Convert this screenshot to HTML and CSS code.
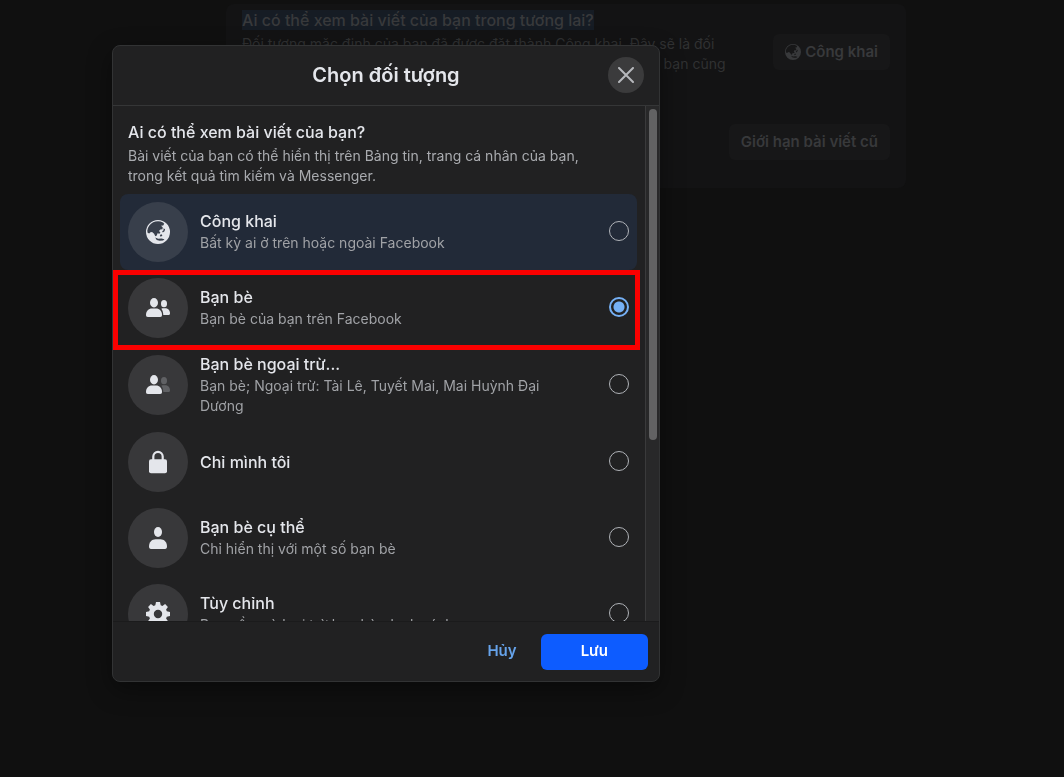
FILE: index.html
```html
<!DOCTYPE html>
<html lang="vi">
<head>
    <meta charset="UTF-8">
    <meta name="viewport" content="width=device-width, initial-scale=1.0">
    <title>Chọn đối tượng</title>
    <link rel="stylesheet" href="styles.css">
</head>
<body>

    <svg width="0" height="0" class="sprite" aria-hidden="true">
        <symbol id="globe" viewBox="0 0 24 24">
            <path fill-rule="evenodd" d="M12 0a12 12 0 1 0 0 24 12 12 0 0 0 0-24zM1.300 10.800C1.700 7 4 3.800 7.200 2.300 10 1 14 .9 17 2.400l1.200 1.400-1 1.600-2.200.4 1.700 1.400-.2 2-2.200.3-1.300 1.500 1.400 1.500-1 1.200-1.900-.4-.7 2.200-1.500.8-1.200-2.600-2-1.700-1.700.2-1.200 1.400-1.600-.8zM17.500 8.300l1.600 1-.6 2-1.700 1.300-.6-1.300 1.400-1zM13.800 15l1.800-.8.8 1.600-1.800.9zM9.200 17.500l3 1.200 3.300-.3 3 .9-1.500 1.200-3.300.3-3-.8z"/>
        </symbol>
        <symbol id="person" viewBox="0 0 24 24">
            <ellipse cx="12" cy="6" rx="4" ry="5"/>
            <path d="M3 20.500C3 16 6 13.200 9.500 13.200h5c3.500 0 6.500 2.800 6.500 7.300 0 1.600-.6 2.500-2 2.500H5c-1.400 0-2-.9-2-2.500z"/>
        </symbol>
        <symbol id="friend-front" viewBox="0 0 24 24">
            <ellipse cx="8" cy="6.700" rx="4" ry="4.700"/>
            <path d="M0 19c0-4 2.600-6.500 6-6.500h4c3.400 0 6 2.500 6 6.500 0 1.300-.5 2-1.800 2H1.800C.5 21 0 20.300 0 19z"/>
        </symbol>
        <symbol id="friend-back" viewBox="0 0 24 24">
            <ellipse cx="18" cy="7.700" rx="3" ry="3.600"/>
            <path d="M15.300 12.800c.8-.4 1.500-.5 2.400-.5h1.300c2.800 0 5 2 5 4.900 0 1.200-.5 1.800-1.500 1.800h-5.200c-.1-2.500-.7-4.500-2-6.200z"/>
        </symbol>
        <symbol id="lock" viewBox="0 0 24 24">
            <path d="M7.300 10V6.600a4.700 4.700 0 0 1 9.400 0V10" fill="none" stroke="currentColor" stroke-width="2.200"/>
            <rect x="3" y="9.300" width="18" height="14" rx="2"/>
        </symbol>
        <symbol id="gear" viewBox="0 0 24 24">
            <path fill-rule="evenodd" d="M10 0h4l.7 3.200 1.700.7 2.700-1.800 2.800 2.800-1.800 2.700.7 1.700L24 10v4l-3.200.7-.7 1.700 1.800 2.700-2.800 2.800-2.700-1.800-1.700.7L14 24h-4l-.7-3.200-1.700-.7-2.700 1.800-2.800-2.800 1.800-2.700-.7-1.700L0 14v-4l3.200-.7.7-1.700-1.800-2.700 2.800-2.800 2.700 1.800 1.700-.7zM12 7.800a4.200 4.200 0 1 0 0 8.400 4.200 4.200 0 0 0 0-8.400z"/>
        </symbol>
    </svg>

    <main class="settings">
        <section class="settings-card">
            <div class="settings-row">
                <div class="settings-text">
                    <h2><mark>Ai có thể xem bài viết của bạn trong tương lai?</mark></h2>
                    <p>Đối tượng mặc định của bạn đã được đặt thành Công khai. Đây sẽ là đối<br>tượng cho tất cả bài viết trong tương lai của bạn, nhưng lúc nào bạn cũng</p>
                </div>
                <button type="button" class="settings-btn"><svg class="btn-icon"><use href="#globe"/></svg>Công khai</button>
            </div>
            <div class="settings-row limit-row">
                <button type="button" class="settings-btn">Giới hạn bài viết cũ</button>
            </div>
        </section>
    </main>

    <div class="overlay">
        <form class="modal" role="dialog" aria-labelledby="modalTitle">
            <header class="modal-header">
                <h1 id="modalTitle">Chọn đối tượng</h1>
                <button type="button" class="close-btn" aria-label="Đóng">
                    <svg viewBox="0 0 16 16"><path d="M1 1l14 14M15 1L1 15"/></svg>
                </button>
            </header>

            <div class="modal-body">
                <div class="options">
                    <div class="intro">
                        <h2>Ai có thể xem bài viết của bạn?</h2>
                        <p>Bài viết của bạn có thể hiển thị trên Bảng tin, trang cá nhân của bạn,<br>trong kết quả tìm kiếm và Messenger.</p>
                    </div>

                    <label class="option hovered">
                        <span class="icon"><svg><use href="#globe"/></svg></span>
                        <span class="option-text">
                            <span class="name">Công khai</span>
                            <span class="desc">Bất kỳ ai ở trên hoặc ngoài Facebook</span>
                        </span>
                        <input type="radio" name="audience">
                    </label>

                    <label class="option marked">
                        <span class="icon"><svg><use href="#friend-front"/><use href="#friend-back"/></svg></span>
                        <span class="option-text">
                            <span class="name">Bạn bè</span>
                            <span class="desc">Bạn bè của bạn trên Facebook</span>
                        </span>
                        <input type="radio" name="audience" checked>
                    </label>

                    <label class="option">
                        <span class="icon"><svg><use href="#friend-front"/><use href="#friend-back" class="faded"/></svg></span>
                        <span class="option-text">
                            <span class="name">Bạn bè ngoại trừ...</span>
                            <span class="desc">Bạn bè; Ngoại trừ: Tài Lê, Tuyết Mai, Mai Huỳnh Đại Dương</span>
                        </span>
                        <input type="radio" name="audience">
                    </label>

                    <label class="option">
                        <span class="icon"><svg><use href="#lock"/></svg></span>
                        <span class="option-text">
                            <span class="name">Chỉ mình tôi</span>
                        </span>
                        <input type="radio" name="audience">
                    </label>

                    <label class="option">
                        <span class="icon"><svg><use href="#person"/></svg></span>
                        <span class="option-text">
                            <span class="name">Bạn bè cụ thể</span>
                            <span class="desc">Chỉ hiển thị với một số bạn bè</span>
                        </span>
                        <input type="radio" name="audience">
                    </label>

                    <label class="option">
                        <span class="icon"><svg><use href="#gear"/></svg></span>
                        <span class="option-text">
                            <span class="name">Tùy chỉnh</span>
                            <span class="desc">Bao gồm và loại trừ bạn bè, danh sách</span>
                        </span>
                        <input type="radio" name="audience">
                    </label>
                </div>
                <div class="scroll-track"><div class="scroll-thumb"></div></div>
            </div>

            <footer class="modal-footer">
                <button type="button" class="cancel-btn">Hủy</button>
                <button type="submit" class="save-btn">Lưu</button>
            </footer>
        </form>
    </div>

</body>
</html>
```
FILE: styles.css
```css
* {
  box-sizing: border-box;
}

body {
  margin: 0;
  background-color: #101010;
  color: #e4e6eb;
  font-family: Inter, "Liberation Sans", sans-serif;
  font-size: 14px;
  line-height: 20px;
}

h1, h2, p {
  margin: 0;
}

button {
  border: none;
  border-radius: 6px;
  font-family: inherit;
  font-size: 15px;
  font-weight: 600;
  line-height: 20px;
  cursor: pointer;
}

svg {
  fill: currentColor;
}

.sprite {
  position: absolute;
}

/* page behind the dialog */
.settings {
  padding: 4px 158px 0 226px;
}

.settings-card {
  padding: 6px 16px 28px;
  border-radius: 8px;
  background-color: #131314;
  color: #303132;
}

.settings-row {
  display: flex;
  justify-content: space-between;
  align-items: center;
}

.settings-text h2 {
  font-size: 16px;
  font-weight: 500;
  line-height: 20px;
  margin-bottom: 4px;
}

.settings-text mark {
  background-color: #161c24;
  color: #38393b;
}

.settings-text {
  height: 84px;
  white-space: nowrap;
}

.settings-btn {
  display: flex;
  align-items: center;
  gap: 4px;
  height: 36px;
  padding: 0 12px;
  background-color: #171718;
  color: #38393b;
}

.btn-icon {
  width: 16px;
  height: 16px;
}

.limit-row {
  justify-content: flex-end;
  margin-top: 30px;
}

/* dialog */
.overlay {
  position: fixed;
  inset: 0;
  padding: 45px 112px;
}

.modal {
  display: flex;
  flex-direction: column;
  max-width: 548px;
  height: calc(100vh - 140px);
  border: 1px solid #323334;
  border-radius: 8px;
  background-color: #212122;
  box-shadow: 0 8px 24px rgba(0, 0, 0, 0.4);
  overflow: hidden;
}

.modal-header {
  display: grid;
  grid-template-columns: 36px 1fr 36px;
  align-items: center;
  height: 60px;
  padding: 0 15px 1px;
  border-bottom: 1px solid #353637;
}

.modal-header h1 {
  grid-column: 2;
  font-size: 20px;
  font-weight: 600;
  line-height: 24px;
  text-align: center;
}

.close-btn {
  display: flex;
  align-items: center;
  justify-content: center;
  width: 36px;
  height: 36px;
  padding: 0;
  border-radius: 50%;
  background-color: #3b3b3c;
  color: #b6b8bc;
}

.close-btn svg {
  width: 16px;
  height: 16px;
  fill: none;
  stroke: currentColor;
  stroke-width: 2;
  stroke-linecap: round;
}

.modal-body {
  display: flex;
  flex: 1;
  min-height: 0;
}

.options {
  flex: 1;
  padding: 16px 8px 0 7px;
  overflow: hidden;
}

.intro {
  padding: 0 8px 8px;
}

.intro h2 {
  font-size: 16px;
  font-weight: 500;
  line-height: 20px;
  margin-bottom: 4px;
}

.intro p {
  color: #a9abaf;
}

.option {
  position: relative;
  display: flex;
  align-items: center;
  gap: 12px;
  padding: 8px;
  border-radius: 8px;
  cursor: pointer;
}

.hovered {
  background-color: #222a38;
}

.marked:after {
  content: '';
  position: absolute;
  inset: 0 -3px -4px -7px;
  border: 5px solid #fa0000;
}

.icon {
  display: flex;
  flex-shrink: 0;
  align-items: center;
  justify-content: center;
  width: 60px;
  height: 60px;
  border-radius: 50%;
  background-color: #38383a;
}

.hovered .icon {
  background-color: #383f4b;
}

.icon svg {
  width: 24px;
  height: 24px;
}

.faded {
  fill: #606164;
}

.option-text {
  display: flex;
  flex: 1;
  flex-direction: column;
  gap: 2px;
  padding-right: 36px;
}

.name {
  font-size: 16px;
  font-weight: 500;
}

.desc {
  color: #a0a2a6;
}

.option input {
  appearance: none;
  width: 20px;
  height: 20px;
  margin: 0 0 2px;
  border: 1px solid #b0b3b8;
  border-radius: 50%;
}

.option input:checked {
  border: 2px solid #75b0f5;
  background: radial-gradient(circle, #75b0f5 5px, transparent 6px);
}

.scroll-track {
  width: 14px;
  padding: 3px;
  border-left: 1px solid #3a3a3b;
  background-color: #282829;
}

.scroll-thumb {
  width: 8px;
  height: 65%;
  border-radius: 4px;
  background-color: #626263;
}

.modal-footer {
  display: flex;
  justify-content: flex-end;
  gap: 12px;
  padding: 12px 11px 11px;
  border-top: 1px solid #1b1b1c;
}

.modal-footer button {
  height: 36px;
  padding-bottom: 2px;
}

.cancel-btn {
  padding: 0 12px;
  background: none;
  color: #66a3ea;
}

.save-btn {
  padding: 0 40px;
  background-color: #0d5cff;
  color: #fff;
}
```
